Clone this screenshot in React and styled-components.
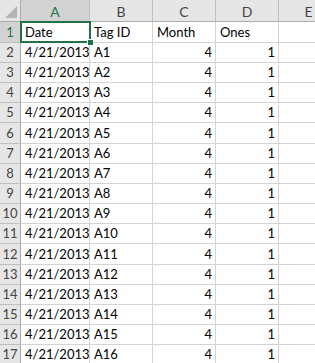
import React from 'react';
import styled, { createGlobalStyle } from 'styled-components';

const GlobalStyle = createGlobalStyle`
    html, body {
        margin: 0;
        padding: 0;
        background: #ffffff;
    }
    body {
        font-family: Lato, "Liberation Sans", sans-serif;
        overflow: hidden;
    }
`

const COLS = [
    { key: 'A', width: 69, align: 'left' },
    { key: 'B', width: 63, align: 'left' },
    { key: 'C', width: 63, align: 'right' },
    { key: 'D', width: 63, align: 'right' },
    { key: 'E', width: 60, align: 'left' },
];

// Excel rows come out at ~20.2px, so a few are a pixel taller
const ROW_HEIGHTS = [21, 20, 20, 20, 20, 21, 20, 20, 20, 20, 20, 21, 20, 20, 20, 20, 20];

const rows = [
    ['Date', 'Tag ID', 'Month', 'Ones', ''],
    ...Array.from({ length: 16 }, (_, i) => ['4/21/2013', `A${i + 1}`, '4', '1', '']),
];

const App = () => (
    <>
        <GlobalStyle />
        <SheetStyle>
            <RowStyle h={22}>
                <CornerStyle>
                    <CornerTriangle />
                </CornerStyle>
                {COLS.map(col => (
                    <ColHeadStyle key={col.key} w={col.width} active={col.key === 'A'}>
                        {col.key}
                    </ColHeadStyle>
                ))}
            </RowStyle>
            {rows.map((cells, r) => (
                <RowStyle key={r} h={ROW_HEIGHTS[r]}>
                    <RowHeadStyle active={r === 0}>{r + 1}</RowHeadStyle>
                    {cells.map((value, c) => (
                        <CellStyle
                            key={c}
                            w={COLS[c].width}
                            align={r === 0 ? 'left' : COLS[c].align}
                        >
                            {value}
                        </CellStyle>
                    ))}
                </RowStyle>
            ))}
            <SelectionStyle>
                <FillHandle />
            </SelectionStyle>
        </SheetStyle>
    </>
);

export const SheetStyle = styled.div`
    position: relative;
    width: 315px;
    height: 363px;
    overflow: hidden;
    display: flex;
    flex-direction: column;
`

export const RowStyle = styled.div`
    display: flex;
    flex-shrink: 0;
    height: ${p => p.h}px;
`

export const CornerStyle = styled.div`
    position: relative;
    box-sizing: border-box;
    width: 21px;
    flex-shrink: 0;
    background: #e6e6e6;
    border-right: 1px solid #ababab;
    border-bottom: 1px solid #ababab;
`

export const CornerTriangle = styled.div`
    position: absolute;
    right: 3px;
    bottom: 3px;
    width: 0;
    height: 0;
    border-left: 12px solid transparent;
    border-bottom: 12px solid #b4b4b4;
`

export const ColHeadStyle = styled.div`
    box-sizing: border-box;
    width: ${p => p.w}px;
    flex-shrink: 0;
    display: flex;
    align-items: center;
    justify-content: center;
    padding-top: 1px;
    font-size: 14px;
    color: ${p => (p.active ? '#217346' : '#444444')};
    background: ${p => (p.active ? '#d2d2d2' : '#e6e6e6')};
    border-right: 1px solid #bfbfbf;
    border-bottom: 1px solid ${p => (p.active ? '#217346' : '#ababab')};
`

export const RowHeadStyle = styled.div`
    box-sizing: border-box;
    width: 21px;
    flex-shrink: 0;
    display: flex;
    align-items: flex-end;
    justify-content: center;
    padding-bottom: 2px;
    font-size: 13px;
    color: ${p => (p.active ? '#217346' : '#444444')};
    background: ${p => (p.active ? '#d2d2d2' : '#e6e6e6')};
    border-right: 1px solid ${p => (p.active ? '#217346' : '#ababab')};
    border-bottom: 1px solid #bfbfbf;
`

export const CellStyle = styled.div`
    box-sizing: border-box;
    width: ${p => p.w}px;
    flex-shrink: 0;
    display: flex;
    align-items: flex-end;
    justify-content: ${p => (p.align === 'right' ? 'flex-end' : 'flex-start')};
    padding: 0 3px 2px 4px;
    font-size: 13px;
    color: #000000;
    white-space: nowrap;
    border-right: 1px solid #d4d4d4;
    border-bottom: 1px solid #d4d4d4;
`

export const SelectionStyle = styled.div`
    position: absolute;
    left: 20px;
    top: 21px;
    width: 71px;
    height: 22px;
    box-sizing: border-box;
    border: 2px solid #217346;
    pointer-events: none;
`

export const FillHandle = styled.div`
    position: absolute;
    right: -4px;
    bottom: -4px;
    width: 5px;
    height: 5px;
    background: #217346;
    border-left: 1px solid #ffffff;
    border-top: 1px solid #ffffff;
`

export default App;
